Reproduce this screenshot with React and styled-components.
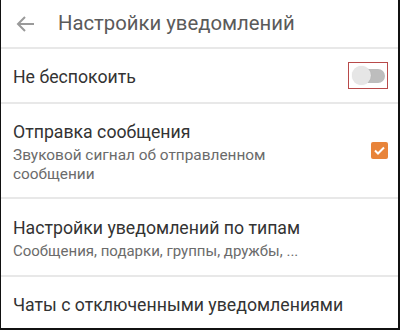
import React from "react";
import styled, { createGlobalStyle } from "styled-components";

const Global = createGlobalStyle`
  html, body { margin: 0; padding: 0; background: #fff; }
  body { font-family: Roboto, "Noto Sans", sans-serif; }
`;

const Frame = styled.div`
  width: 400px;
  height: 330px;
  box-sizing: border-box;
  border-left: 1px solid #111;
  border-right: 2px solid #111;
  border-bottom: 2px solid #111;
  overflow: hidden;
  display: flex;
  flex-direction: column;
  background: #fff;
`;

const Header = styled.div`
  height: 47px;
  flex: none;
  display: flex;
  align-items: center;
  border-bottom: 2px solid #e8e8e8;
  box-sizing: content-box;
`;

const Back = styled.div`
  width: 57px;
  display: flex;
  align-items: center;
  padding-left: 14px;
  box-sizing: border-box;
`;

const Title = styled.div`
  font-size: 20.3px;
  color: #5a5a5a;
  margin-top: -2px;
`;

const Row = styled.div`
  flex: none;
  height: ${(p) => p.$h}px;
  display: flex;
  align-items: center;
  padding: 0 10px 0 12px;
  border-bottom: ${(p) => (p.$last ? "none" : "2px solid #e8e8e8")};
  box-sizing: content-box;
`;

const Texts = styled.div`
  flex: 1;
  display: flex;
  flex-direction: column;
  padding-top: ${(p) => p.$pt || 0}px;
`;

const Main = styled.div`
  font-size: 17.7px;
  color: #333;
  line-height: 22px;
`;

const Sub = styled.div`
  font-size: ${(p) => p.$size || 15.4}px;
  color: #6b6b6b;
  line-height: 19px;
  margin-top: 3px;
  max-width: ${(p) => p.$max || 400}px;
`;

const ToggleFrame = styled.div`
  width: 38px;
  height: 25px;
  border: 1px solid #b84a4a;
  position: relative;
`;

const Track = styled.div`
  position: absolute;
  left: 12px;
  top: 6px;
  width: 24px;
  height: 14px;
  border-radius: 7px;
  background: #bdbdbd;
`;

const Knob = styled.div`
  position: absolute;
  left: 3px;
  top: 3px;
  width: 19px;
  height: 19px;
  border-radius: 50%;
  background: #e6e6e6;
  box-shadow: 0 0 1px rgba(0, 0, 0, 0.15);
`;

const Check = styled.div`
  width: 17px;
  height: 17px;
  border-radius: 2px;
  background: #e8843a;
  display: flex;
  align-items: center;
  justify-content: center;
`;

export default function App() {
  return (
    <>
      <Global />
      <Frame>
        <Header>
          <Back>
            <svg width="20" height="18" viewBox="0 0 20 18">
              <path d="M19 9H3M10 2L3 9l7 7" fill="none" stroke="#9a9a9a" strokeWidth="2" />
            </svg>
          </Back>
          <Title>Настройки уведомлений</Title>
        </Header>
        <Row $h={53}>
          <Texts $pt={2}>
            <Main>Не беспокоить</Main>
          </Texts>
          <ToggleFrame>
            <Track />
            <Knob />
          </ToggleFrame>
        </Row>
        <Row $h={93}>
          <Texts $pt={4}>
            <Main>Отправка сообщения</Main>
            <Sub $max={290}>Звуковой сигнал об отправленном сообщении</Sub>
          </Texts>
          <Check>
            <svg width="13" height="13" viewBox="0 0 13 13">
              <path d="M2 6.5l3 3 6-6" fill="none" stroke="#fff" strokeWidth="2" />
            </svg>
          </Check>
        </Row>
        <Row $h={76}>
          <Texts $pt={4}>
            <Main>Настройки уведомлений по типам</Main>
            <Sub $size={15}>Сообщения, подарки, группы, дружбы, ...</Sub>
          </Texts>
        </Row>
        <Row $h={50} $last>
          <Texts $pt={6}>
            <Main>Чаты с отключенными уведомлениями</Main>
          </Texts>
        </Row>
      </Frame>
    </>
  );
}
